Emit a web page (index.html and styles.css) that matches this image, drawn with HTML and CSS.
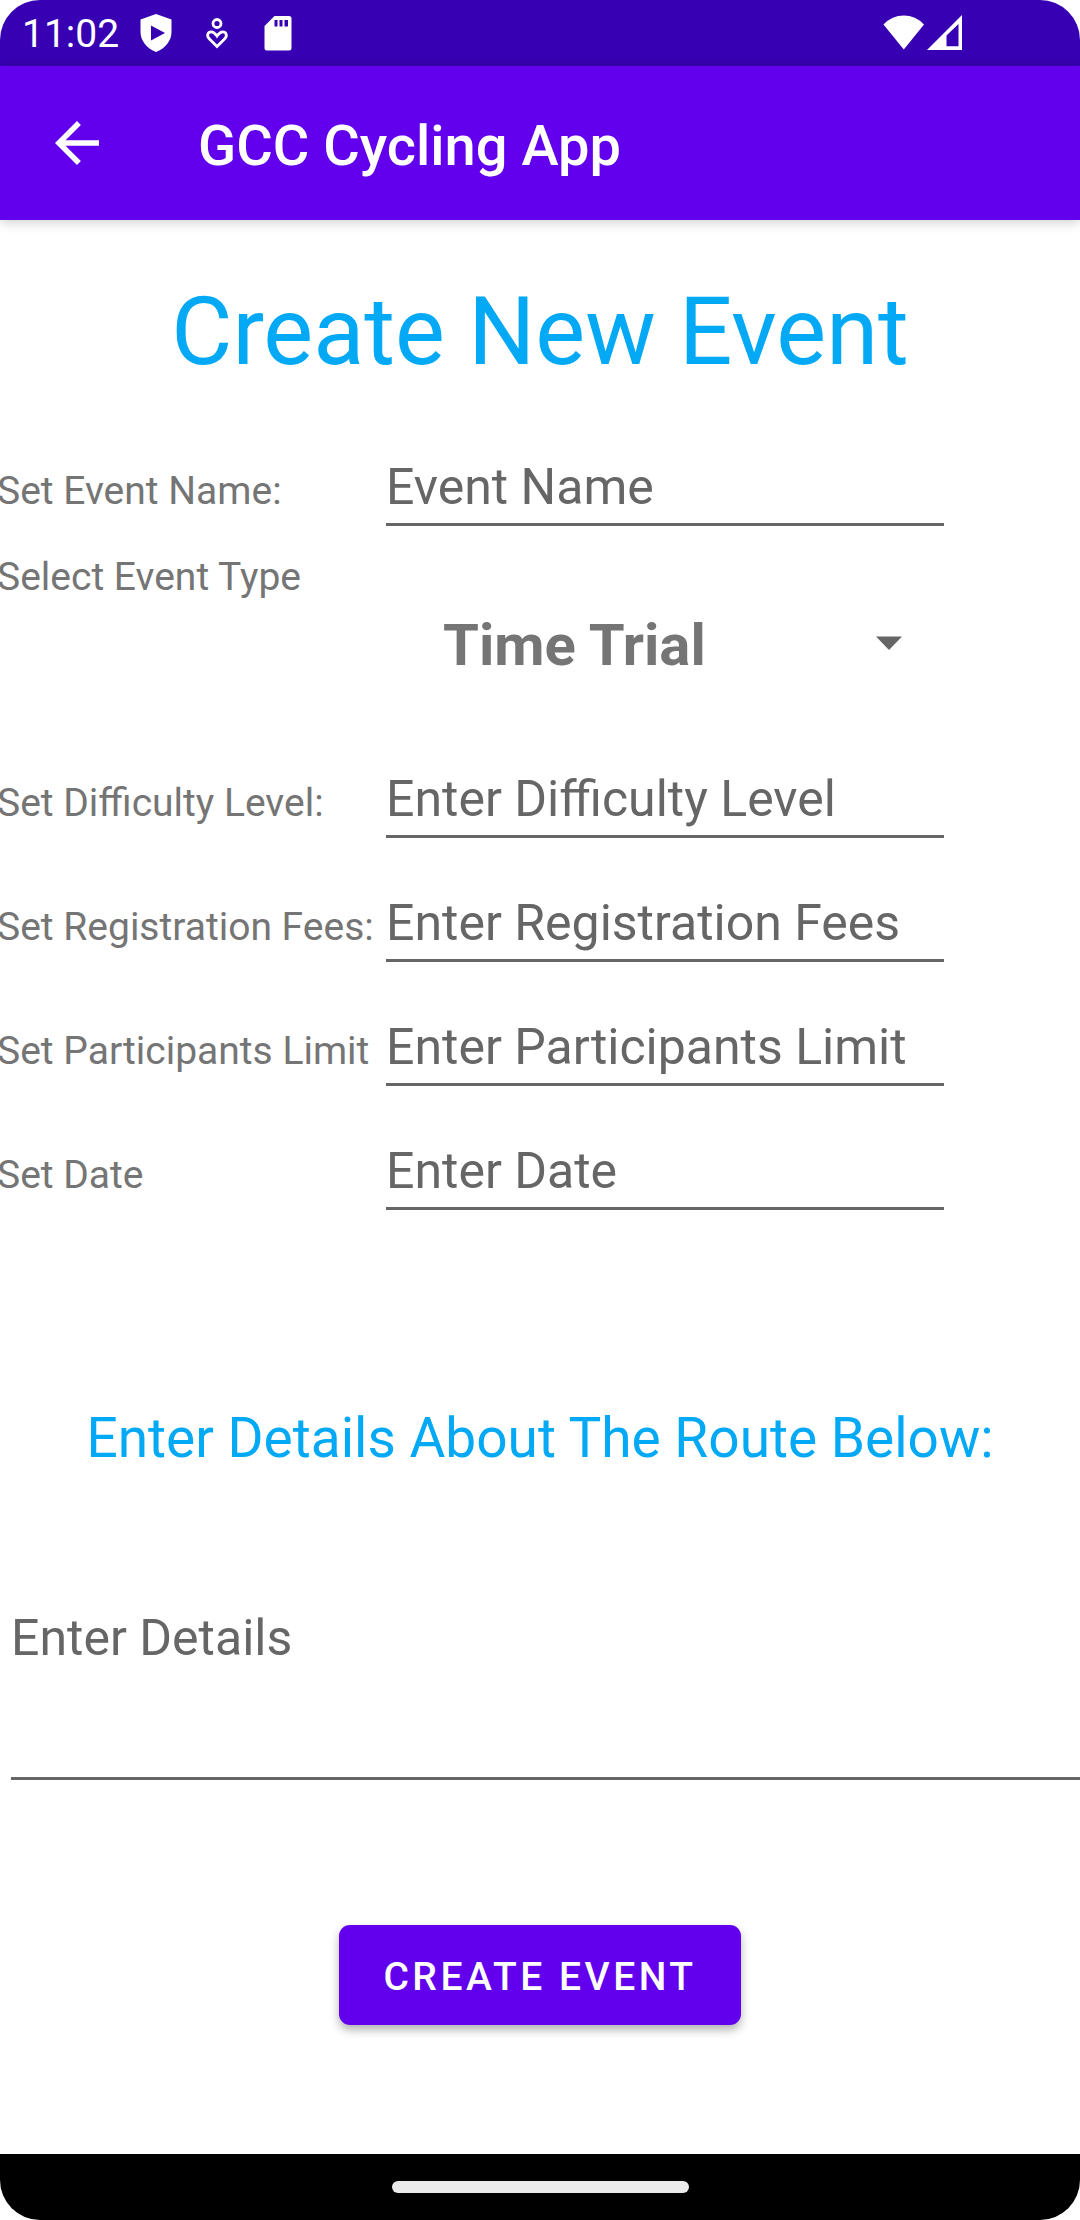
FILE: index.html
```html
<!DOCTYPE html>
<html lang="en">
<head>
  <meta charset="utf-8">
  <meta name="viewport" content="width=device-width, initial-scale=1">
  <title>GCC Cycling App</title>
  <link rel="stylesheet" href="styles.css">
</head>
<body>
  <div class="status-bar">
    <span class="clock">11:02</span>
    <div class="notifications">
      <svg class="status-icon" viewBox="0 0 44 44" aria-hidden="true">
        <path fill="#fff" fill-rule="evenodd" d="M22 3 37.500 8.500V21C37.500 30 31 37.500 22 41 13 37.500 6.500 30 6.500 21V8.500ZM17 14.500V29.500L31 22Z"/>
      </svg>
      <svg class="status-icon" viewBox="0 0 44 44" aria-hidden="true">
        <g fill="none" stroke="#fff" stroke-width="2.800">
          <circle cx="22" cy="12.500" r="4"/>
          <path d="M22 35.500 14.500 28C11 24.500 13 20.800 16.200 20.800 18.500 20.800 20 22 22 25 24 22 25.500 20.800 27.800 20.800 31 20.800 33 24.500 29.500 28Z"/>
        </g>
      </svg>
      <svg class="status-icon" viewBox="0 0 44 44" aria-hidden="true">
        <path fill="#fff" fill-rule="evenodd" d="M18.500 5H33Q35.500 5 35.500 7.500V37Q35.500 39.500 33 39.500H11Q8.500 39.500 8.500 37V15ZM18.500 9V15.500H21.500V9ZM23.500 9V15.500H26.500V9ZM28.500 9V15.500H32V9Z"/>
      </svg>
    </div>
    <div class="signals">
      <svg class="signal-icon wifi" viewBox="0 0 42 36" aria-hidden="true">
        <path fill="#fff" d="M0.500 9.500Q9 .500 20.800.500T41 9.500L20.800 34.500Z"/>
      </svg>
      <svg class="signal-icon cell" viewBox="0 0 36 36" aria-hidden="true">
        <path fill="#fff" fill-rule="evenodd" d="M0 35 35 0V35ZM19.500 20.500V31.300H31.500V9Z"/>
      </svg>
    </div>
  </div>

  <header class="app-bar">
    <button class="back" type="button" aria-label="Back">
      <svg viewBox="0 0 24 24" aria-hidden="true">
        <path fill="#fff" d="M20 11H7.830l5.590-5.590L12 4l-8 8 8 8 1.410-1.410L7.830 13H20v-2z"/>
      </svg>
    </button>
    <span class="app-title">GCC Cycling App</span>
  </header>

  <main class="content">
    <h1 class="page-title">Create New Event</h1>
    <form class="event-form">
      <div class="field">
        <label for="event-name">Set Event Name:</label>
        <input class="text-input" id="event-name" type="text" placeholder="Event Name">
      </div>
      <div class="field field-type">
        <label for="event-type">Select Event Type</label>
        <div class="spinner">
          <select id="event-type">
            <option selected>Time Trial</option>
          </select>
          <svg class="caret" viewBox="0 0 28 20" aria-hidden="true"><path fill="#666" d="M1 1.500H27L14 15Z"/></svg>
        </div>
      </div>
      <div class="field">
        <label for="difficulty">Set Difficulty Level:</label>
        <input class="text-input" id="difficulty" type="text" placeholder="Enter Difficulty Level">
      </div>
      <div class="field">
        <label for="fees">Set Registration Fees:</label>
        <input class="text-input" id="fees" type="text" placeholder="Enter Registration Fees">
      </div>
      <div class="field">
        <label for="limit">Set Participants Limit</label>
        <input class="text-input" id="limit" type="text" placeholder="Enter Participants Limit">
      </div>
      <div class="field">
        <label for="date">Set Date</label>
        <input class="text-input" id="date" type="text" placeholder="Enter Date">
      </div>
      <h2 class="route-title"><label for="details">Enter Details About The Route Below:</label></h2>
      <textarea class="text-input details" id="details" placeholder="Enter Details"></textarea>
      <button class="submit" type="submit">CREATE EVENT</button>
    </form>
  </main>

  <div class="nav-bar"><span class="home-handle"></span></div>
</body>
</html>
```
FILE: styles.css
```css
* {
  box-sizing: border-box;
}

html {
  background: #fff;
}

body {
  margin: 0;
  min-height: 100vh;
  display: flex;
  flex-direction: column;
  overflow-x: hidden;
  background: #fff;
  color: #757575;
  font-family: Roboto, "Noto Sans", sans-serif;
}

button,
input,
select,
textarea {
  margin: 0;
  padding: 0;
  border: 0;
  border-radius: 0;
  background: none;
  font-family: inherit;
}

.status-bar {
  display: flex;
  align-items: center;
  height: 66px;
  padding: 0 117px 0 22px;
  border-radius: 40px 40px 0 0;
  background: #3700b3;
  color: #fff;
}

.clock {
  width: 112px;
  padding-top: 2px;
  font-size: 39px;
  line-height: 46px;
}

.notifications {
  display: flex;
  gap: 17px;
}

.status-icon {
  width: 44px;
  height: 44px;
}

.signals {
  display: flex;
  gap: 2px;
  margin-left: auto;
}

.signal-icon {
  height: 36px;
}

.wifi {
  width: 42px;
}

.cell {
  width: 36px;
}

.app-bar {
  display: flex;
  align-items: center;
  gap: 88px;
  height: 154px;
  padding: 0 44px;
  background: #6200ee;
  box-shadow: 0 2px 12px rgba(0, 0, 0, 0.2);
  color: #fff;
}

.back {
  width: 66px;
  height: 66px;
}

.back svg {
  display: block;
}

.app-title {
  padding-top: 6px;
  font-size: 56px;
  font-weight: 500;
  line-height: 64px;
}

.content {
  flex: 1;
  padding: 57px 0 128px;
}

.page-title,
.route-title {
  margin: 0;
  color: #03a9f4;
  font-weight: 400;
  text-align: center;
}

.page-title {
  font-size: 94px;
  line-height: 110px;
}

.event-form {
  display: flex;
  flex-direction: column;
  padding-top: 15px;
}

.field {
  display: grid;
  grid-template-columns: 386px minmax(0, 1fr);
  align-items: baseline;
  margin-top: 55px;
  padding-right: 136px;
}

.field > label {
  margin-left: -3px;
  font-size: 39px;
  line-height: 46px;
  white-space: nowrap;
}

.field-type {
  align-items: start;
  margin-top: 28px;
  padding-bottom: 33px;
}

.text-input {
  width: 100%;
  height: 69px;
  padding-bottom: 6px;
  border-bottom: 3px solid #666;
  color: #212121;
  font-size: 50px;
  line-height: 60px;
}

.text-input::placeholder {
  color: #666;
  opacity: 1;
}

.spinner {
  display: grid;
  align-items: center;
  margin-top: 55px;
}

.spinner select,
.caret {
  grid-area: 1 / 1;
}

.spinner select {
  width: 100%;
  height: 72px;
  padding-left: 57px;
  appearance: none;
  color: #757575;
  font-size: 58px;
  font-weight: 700;
  line-height: 72px;
}

.caret {
  width: 28px;
  height: 20px;
  margin-right: 41px;
  justify-self: end;
  pointer-events: none;
}

.route-title {
  margin-top: 196px;
  font-size: 55px;
  line-height: 64px;
}

.details {
  display: block;
  width: auto;
  height: 172px;
  margin: 138px 0 0 11px;
  resize: none;
}

.submit {
  align-self: center;
  height: 100px;
  margin-top: 145px;
  padding: 3px 44px 0;
  border-radius: 11px;
  background: #6200ee;
  box-shadow: 0 5px 10px rgba(0, 0, 0, 0.3);
  color: #fff;
  font-size: 39px;
  font-weight: 500;
  letter-spacing: 0.09em;
}

.nav-bar {
  display: flex;
  align-items: center;
  justify-content: center;
  height: 66px;
  border-radius: 0 0 40px 40px;
  background: #000;
}

.home-handle {
  width: 297px;
  height: 12px;
  border-radius: 6px;
  background: #ebebeb;
}
```
